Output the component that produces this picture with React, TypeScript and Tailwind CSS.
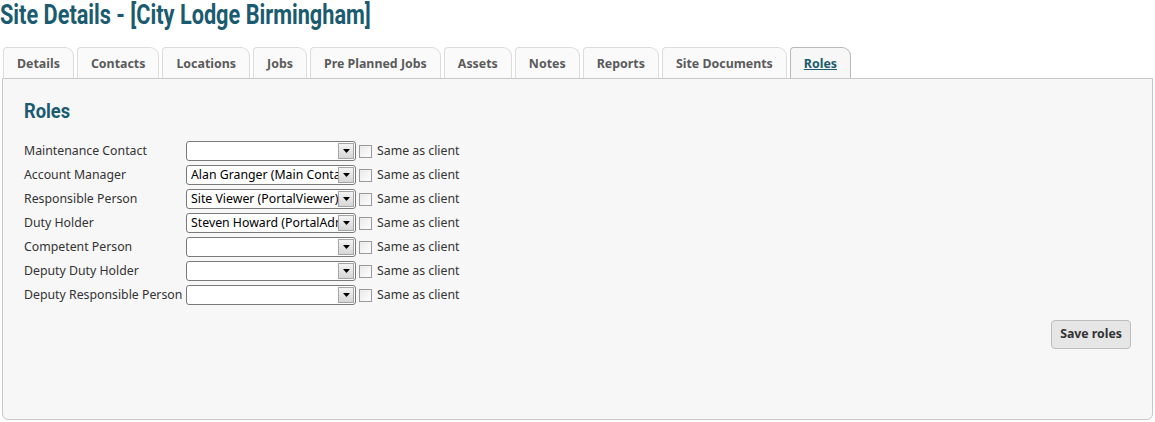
const tabs = [
  'Details',
  'Contacts',
  'Locations',
  'Jobs',
  'Pre Planned Jobs',
  'Assets',
  'Notes',
  'Reports',
  'Site Documents',
  'Roles',
]

const roles: { label: string; value: string }[] = [
  { label: 'Maintenance Contact', value: '' },
  { label: 'Account Manager', value: 'Alan Granger (Main Contact)' },
  { label: 'Responsible Person', value: 'Site Viewer (PortalViewer)' },
  { label: 'Duty Holder', value: 'Steven Howard (PortalAdmin)' },
  { label: 'Competent Person', value: '' },
  { label: 'Deputy Duty Holder', value: '' },
  { label: 'Deputy Responsible Person', value: '' },
]

// narrow bold heading face: Roboto squeezed horizontally
const heading = "inline-block origin-left font-['Roboto',sans-serif] font-bold text-[#1b5b6f] whitespace-nowrap"

function RoleSelect({ value }: { value: string }) {
  return (
    <div className="flex h-[20px] w-[170px] items-stretch rounded-[3px] border border-[#7a7a7a] bg-white pl-[4px] pr-[1px] py-[1px]">
      <span className="flex-1 overflow-hidden whitespace-nowrap text-[12.3px] leading-[16px] text-black">{value}</span>
      <span className="flex w-[16px] items-center justify-center border border-[#a5a5a5] bg-gradient-to-b from-[#f4f4f4] to-[#d6d6d6]">
        <svg width="7" height="4" viewBox="0 0 7 4">
          <path d="M0 0h7L3.5 4z" fill="#000" />
        </svg>
      </span>
    </div>
  )
}

export default function App() {
  return (
    <div className="min-h-[422px] bg-white font-['Noto_Sans',sans-serif] text-[#333]">
      <h1 className="h-[30px]">
        <span className={`${heading} scale-x-[0.775] text-[28px] leading-[29px]`}>Site Details - [City Lodge Birmingham]</span>
      </h1>

      <div className="mt-[17px] flex gap-[3px] pl-[3px]">
        {tabs.map((t) => {
          const active = t === 'Roles'
          return (
            <div
              key={t}
              className={
                'h-[31px] rounded-tl-[4px] rounded-tr-[9px] border border-b-0 px-[13px] pt-[7px] text-[12.4px] font-bold leading-[17px] ' +
                (active
                  ? 'border-[#b9b9b9] bg-[#f7f7f7] text-[#1b5b6f] underline'
                  : 'border-[#dcdcdc] bg-[#fafafa] text-[#5b5b5b]')
              }
            >
              {t}
            </div>
          )
        })}
      </div>

      <div className="mx-[2px] flex h-[342px] flex-col rounded-b-[6px] border border-[#c8c8c8] bg-[#f7f7f7] px-[21px]">
        <h2 className="mt-[19px] h-[26px]">
          <span className={`${heading} scale-x-[0.87] text-[21px] leading-[26px]`}>Roles</span>
        </h2>

        <div className="mt-[17px] flex flex-col gap-[4px]">
          {roles.map((r) => (
            <div key={r.label} className="flex h-[20px] items-center">
              <span className="w-[162px] whitespace-nowrap text-[12.3px] text-[#333]">{r.label}</span>
              <RoleSelect value={r.value} />
              <span className="ml-[3px] h-[13px] w-[13px] border border-[#9a9a9a] bg-gradient-to-br from-[#e9e9e9] to-white" />
              <span className="ml-[5px] text-[12.3px] text-[#333]">Same as client</span>
            </div>
          ))}
        </div>

        <div className="mt-[15px] flex justify-end">
          <button className="h-[29px] rounded-[4px] border border-[#bdbdbd] bg-[#e6e6e6] px-[8px] text-[12.3px] font-bold text-[#333]">
            Save roles
          </button>
        </div>
      </div>
    </div>
  )
}
